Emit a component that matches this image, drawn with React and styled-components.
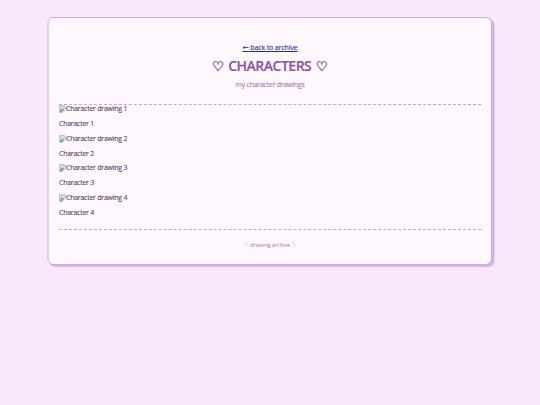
import styled, { createGlobalStyle } from "styled-components"

const characters = [1, 2, 3, 4]

const App = () => {
  return <>
    <GlobalStyle />
    <Container>
      <Header>
        <BackLink href="#"><Arrow>←</Arrow> back to archive</BackLink>
        <Title><Heart>♡</Heart><Name>CHARACTERS</Name><Heart>♡</Heart></Title>
        <Subtitle>my character drawings</Subtitle>
      </Header>

      <Gallery>
        {characters.map((n) => (
          <Card key={n}>
            <Picture>
              <BrokenImage />
              <Label>Character drawing {n}</Label>
            </Picture>
            <Caption>Character {n}</Caption>
          </Card>
        ))}
      </Gallery>

      <Footer>♡ drawing archive ♡</Footer>
    </Container>
  </>
};

// placeholder icon for a drawing that is not loaded
const BrokenImage = () => (
  <Icon viewBox="0 0 16 16">
    <path d="M1 1h10l4 4v10H1z" fill="#cddcf0" stroke="#9a94a2" />
    <path d="M2 14V11q3-5 7-3l2 1-5 5z" fill="#7db388" />
    <path d="M11 1v4h4" fill="#fff" stroke="#aaa3b3" />
    <path d="M16 7l-9 9h9z" fill="#fff9ff" />
  </Icon>
)

export default App;

const GlobalStyle = createGlobalStyle`
  body {
    display: flow-root;
    box-sizing: border-box;
    min-height: 100vh;
    margin: 0;
    background: #f7e9fa;
    color: #5a4060;
    font-family: "Open Sans", "DejaVu Sans", sans-serif;
    font-size: 7px;
    font-weight: 500;
    letter-spacing: -0.25px;
    -webkit-text-stroke: 0.1px currentColor;
  }
`;

const Container = styled.main`
  box-sizing: border-box;
  width: 445px;
  height: 248px;
  margin: 17px 0 0 47px;
  padding: 10px;
  border: 1px solid #d0a9dc;
  border-left: 2px solid #e5cfed;
  border-radius: 6px;
  background: #fff9ff;
  box-shadow: 2.5px 2px 0 #d8b4e2;
`;

const Header = styled.header`
  display: flex;
  flex-direction: column;
  align-items: center;
  height: 77px;
  box-sizing: border-box;
  padding-top: 14.5px;
  border-bottom: 1px dashed #c9a5d2;
`;

const BackLink = styled.a`
  line-height: 10px;
  color: #2222d8;
  letter-spacing: -0.12px;
  text-decoration-thickness: 1px;
`;

const Arrow = styled.span`
  font-family: "DejaVu Sans", sans-serif;
  font-size: 7.5px;
  line-height: 1;
`;

const Title = styled.h1`
  display: flex;
  gap: 4px;
  margin: 4px 0 0;
  font-size: 14px;
  font-weight: 600;
  line-height: 18px;
  letter-spacing: 0;
  color: #8e54a6;
`;

const Name = styled.span`
  letter-spacing: -0.5px;
  margin-right: 0.5px;
  -webkit-text-stroke: 0.2px currentColor;
`;

const Heart = styled.span`
  font-family: "DejaVu Sans", sans-serif;
  font-size: 13.5px;
  font-weight: bold;
  -webkit-text-stroke: 0.45px currentColor;
`;

const Subtitle = styled.p`
  margin: 5.5px 0 0;
  line-height: 10px;
  color: #a67ab2;
`;

const Gallery = styled.section`
  height: 124px;
`;

const Card = styled.div`
  height: 29.5px;
`;

const Picture = styled.div`
  display: flex;
  height: 9px;
`;

const Icon = styled.svg`
  width: 8px;
  height: 8px;
  margin-right: -1px;
`;

const Label = styled.span`
  white-space: nowrap;
  line-height: 8.6px;
`;

const Caption = styled.p`
  margin: 5.4px 0 0;
  line-height: 9px;
`;

const Footer = styled.footer`
  border-top: 1px dashed #c9a5d2;
  padding-top: 10px;
  text-align: center;
  font-size: 5.7px;
  letter-spacing: -0.14px;
  line-height: 10px;
  color: #a67ab2;
  -webkit-text-stroke: 0;
`;
